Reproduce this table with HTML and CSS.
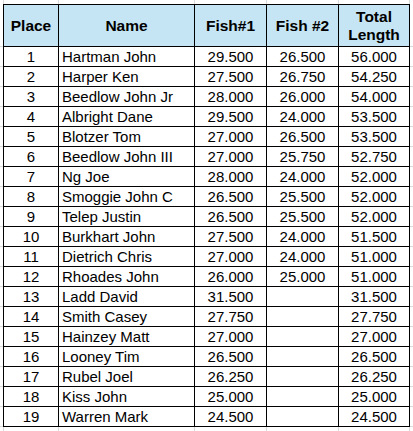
FILE: index.html
```html
<!DOCTYPE html>
<html>
<head>
<meta charset="utf-8">
<link rel="stylesheet" href="styles.css">
</head>
<body>
<div class="sheet">
<table class="results">
<colgroup>
<col class="c-place"><col class="c-name"><col class="c-f1"><col class="c-f2"><col class="c-total">
</colgroup>
<thead>
<tr class="head"><th>Place</th><th>Name</th><th>Fish#1</th><th>Fish #2</th><th>Total<br>Length</th></tr>
</thead>
<tbody>
<tr><td class="num">1</td><td class="name">Hartman John</td><td class="num">29.500</td><td class="num">26.500</td><td class="num">56.000</td></tr>
<tr><td class="num">2</td><td class="name">Harper Ken</td><td class="num">27.500</td><td class="num">26.750</td><td class="num">54.250</td></tr>
<tr><td class="num">3</td><td class="name">Beedlow John Jr</td><td class="num">28.000</td><td class="num">26.000</td><td class="num">54.000</td></tr>
<tr><td class="num">4</td><td class="name">Albright Dane</td><td class="num">29.500</td><td class="num">24.000</td><td class="num">53.500</td></tr>
<tr><td class="num">5</td><td class="name">Blotzer Tom</td><td class="num">27.000</td><td class="num">26.500</td><td class="num">53.500</td></tr>
<tr><td class="num">6</td><td class="name">Beedlow John III</td><td class="num">27.000</td><td class="num">25.750</td><td class="num">52.750</td></tr>
<tr><td class="num">7</td><td class="name">Ng Joe</td><td class="num">28.000</td><td class="num">24.000</td><td class="num">52.000</td></tr>
<tr><td class="num">8</td><td class="name">Smoggie John C</td><td class="num">26.500</td><td class="num">25.500</td><td class="num">52.000</td></tr>
<tr><td class="num">9</td><td class="name">Telep Justin</td><td class="num">26.500</td><td class="num">25.500</td><td class="num">52.000</td></tr>
<tr><td class="num">10</td><td class="name">Burkhart John</td><td class="num">27.500</td><td class="num">24.000</td><td class="num">51.500</td></tr>
<tr><td class="num">11</td><td class="name">Dietrich Chris</td><td class="num">27.000</td><td class="num">24.000</td><td class="num">51.000</td></tr>
<tr><td class="num">12</td><td class="name">Rhoades John</td><td class="num">26.000</td><td class="num">25.000</td><td class="num">51.000</td></tr>
<tr><td class="num">13</td><td class="name">Ladd David</td><td class="num">31.500</td><td class="num"></td><td class="num">31.500</td></tr>
<tr><td class="num">14</td><td class="name">Smith Casey</td><td class="num">27.750</td><td class="num"></td><td class="num">27.750</td></tr>
<tr><td class="num">15</td><td class="name">Hainzey Matt</td><td class="num">27.000</td><td class="num"></td><td class="num">27.000</td></tr>
<tr><td class="num">16</td><td class="name">Looney Tim</td><td class="num">26.500</td><td class="num"></td><td class="num">26.500</td></tr>
<tr><td class="num">17</td><td class="name">Rubel Joel</td><td class="num">26.250</td><td class="num"></td><td class="num">26.250</td></tr>
<tr><td class="num">18</td><td class="name">Kiss John</td><td class="num">25.000</td><td class="num"></td><td class="num">25.000</td></tr>
<tr><td class="num">19</td><td class="name">Warren Mark</td><td class="num">24.500</td><td class="num"></td><td class="num">24.500</td></tr>
</tbody>
</table>
</div>
</body>
</html>
```

FILE: styles.css
```css
html, body {
  margin: 0;
  padding: 0;
  background: #ffffff;
}
body {
  width: 413px;
  height: 431px;
  overflow: hidden;
  background-color: #fff;
  background-image:
    linear-gradient(#dadada, #dadada),
    linear-gradient(#dadada, #dadada),
    linear-gradient(#dadada, #dadada),
    linear-gradient(#dadada, #dadada),
    linear-gradient(#dadada, #dadada),
    linear-gradient(#dadada, #dadada),
    repeating-linear-gradient(to bottom, #dadada 0, #dadada 1px, transparent 1px, transparent 20px);
  background-size: 1px 100%, 1px 100%, 1px 100%, 1px 100%, 1px 100%, 1px 100%, 100% 400px;
  background-position: 3px 0, 58px 0, 194px 0, 266px 0, 338px 0, 409px 0, 0 46px;
  background-repeat: no-repeat;
}
.sheet {
  padding: 4px 0 0 3px;
}
.results {
  border-collapse: collapse;
  table-layout: fixed;
  width: 407px;
  font-family: "Liberation Sans", Arial, sans-serif;
  font-size: 15px;
  color: #000;
  background: #fff;
}
.c-place { width: 55px; }
.c-name { width: 136px; }
.c-f1 { width: 72px; }
.c-f2 { width: 72px; }
.c-total { width: 71px; }
.results th,
.results td {
  border: 1px solid #000;
  padding: 0;
  white-space: nowrap;
  overflow: hidden;
}
.head {
  height: 42px;
}
.results th {
  background: #c5e5f4;
  font-weight: bold;
  font-size: 15.5px;
  line-height: 18px;
  text-align: center;
  vertical-align: middle;
}
.results tbody tr {
  height: 20px;
}
.results td {
  line-height: 16px;
  vertical-align: bottom;
  padding-bottom: 1px;
}
.num {
  text-align: center;
}
.name {
  text-align: left;
  padding-left: 3px !important;
}
```
